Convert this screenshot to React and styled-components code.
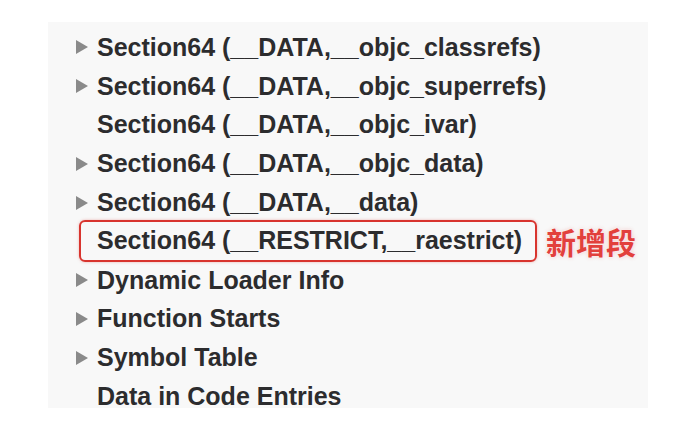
import styled, { createGlobalStyle } from "styled-components";

const GlobalStyle = createGlobalStyle`
  html, body {
    margin: 0;
    padding: 0;
    background: #ffffff;
  }
`

const rows = [
  { label: "Section64 (__DATA,__objc_classrefs)", arrow: true },
  { label: "Section64 (__DATA,__objc_superrefs)", arrow: true },
  { label: "Section64 (__DATA,__objc_ivar)", arrow: false },
  { label: "Section64 (__DATA,__objc_data)", arrow: true },
  { label: "Section64 (__DATA,__data)", arrow: true },
  { label: "Section64 (__RESTRICT,__raestrict)", arrow: false, isNew: true },
  { label: "Dynamic Loader Info", arrow: true },
  { label: "Function Starts", arrow: true },
  { label: "Symbol Table", arrow: true },
  { label: "Data in Code Entries", arrow: false },
]

const Disclosure = () => (
  <svg width="12" height="14" viewBox="0 0 12 14">
    <path d="M0 0 L12 7 L0 14 Z" fill="#8a8a8a" />
  </svg>
)

const App = () => {
  return (
    <>
      <GlobalStyle />
      <Panel>
        {rows.map((row) =>
          row.isNew ? (
            <Row key={row.label}>
              <Highlight>
                <Label>{row.label}</Label>
              </Highlight>
              <NewTag>新增段</NewTag>
            </Row>
          ) : (
            <Row key={row.label}>
              <Arrow>{row.arrow && <Disclosure />}</Arrow>
              <Label>{row.label}</Label>
            </Row>
          )
        )}
      </Panel>
    </>
  )
}

const Panel = styled.div`
  margin: 22px 0 0 48px;
  width: 600px;
  height: 386px;
  box-sizing: border-box;
  padding: 6px 0 0 28px;
  background: #f8f8f8;
  display: flex;
  flex-direction: column;
`

const Row = styled.div`
  flex-shrink: 0;
  height: 38.8px;
  display: flex;
  align-items: center;
`

const Arrow = styled.span`
  width: 21px;
  display: flex;
  align-items: center;
`

const Label = styled.span`
  font-family: "Liberation Sans", Arial, sans-serif;
  font-weight: bold;
  font-size: 25px;
  color: #2c2c2e;
  white-space: nowrap;
`

const Highlight = styled.div`
  height: 42px;
  width: 458px;
  box-sizing: border-box;
  margin: -2px 0 -1px 3px;
  padding-left: 16px;
  display: flex;
  align-items: center;
  border: 2px solid #d8342e;
  border-radius: 6px;
  box-shadow: 0 0 3px rgba(216, 52, 46, 0.35);
`

const NewTag = styled.span`
  margin-left: 9px;
  font-family: "Noto Sans CJK SC", sans-serif;
  font-weight: bold;
  font-size: 30px;
  color: #e2403c;
  text-shadow: 0 0 2px #fff, 0 0 4px rgba(224, 64, 60, 0.3);
`

export default App
